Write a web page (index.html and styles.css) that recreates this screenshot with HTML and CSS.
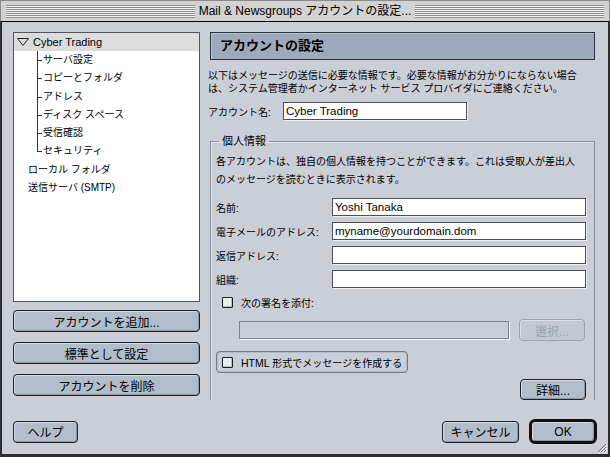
FILE: index.html
```html
<!DOCTYPE html>
<html>
<head>
<meta charset="UTF-8">
<title>Mail &amp; Newsgroups アカウントの設定</title>
<link rel="stylesheet" href="styles.css">
</head>
<body>
<div class="window">
    <div class="titlebar">
        <span class="stripes"></span>
        <span class="title">Mail &amp; Newsgroups アカウントの設定...</span>
        <span class="stripes"></span>
    </div>
    <div class="frame">
        <div class="columns">
            <div class="side">
                <ul class="tree">
                    <li class="row top selected">
                        <svg class="twisty" width="12" height="8" viewBox="0 0 12 8"><polygon points="0.5,0.5 11.5,0.5 6,7.5" fill="none" stroke="#222" stroke-width="1"/></svg>
                        <span class="en">Cyber Trading</span>
                    </li>
                    <li class="row child">サーバ設定</li>
                    <li class="row child">コピーとフォルダ</li>
                    <li class="row child">アドレス</li>
                    <li class="row child">ディスク スペース</li>
                    <li class="row child">受信確認</li>
                    <li class="row child last">セキュリティ</li>
                    <li class="row plain">ローカル フォルダ</li>
                    <li class="row plain">送信サーバ (SMTP)</li>
                </ul>
                <button class="btn side-btn">アカウントを追加...</button>
                <button class="btn side-btn">標準として設定</button>
                <button class="btn side-btn">アカウントを削除</button>
            </div>
            <div class="pane">
                <h1 class="pane-head">アカウントの設定</h1>
                <p class="intro">以下はメッセージの送信に必要な情報です。必要な情報がお分かりにならない場合<br>は、システム管理者かインターネット サービス プロバイダにご連絡ください。</p>
                <div class="account-row">
                    <label class="account-label">アカウント名:</label>
                    <input class="text account-input" type="text" value="Cyber Trading">
                </div>
                <fieldset class="group">
                    <legend>個人情報</legend>
                    <p class="group-intro">各アカウントは、独自の個人情報を持つことができます。これは受取人が差出人<br>のメッセージを読むときに表示されます。</p>
                    <div class="form-grid">
                        <label>名前:</label>
                        <input class="text" type="text" value="Yoshi Tanaka">
                        <label>電子メールのアドレス:</label>
                        <input class="text" type="text" value="myname@yourdomain.dom">
                        <label>返信アドレス:</label>
                        <input class="text" type="text" value="">
                        <label>組織:</label>
                        <input class="text" type="text" value="">
                    </div>
                    <label class="check sig-check"><span class="box"></span><span>次の署名を添付:</span></label>
                    <div class="sig-row">
                        <input class="text sig-input" type="text" disabled>
                        <button class="btn small-btn" disabled>選択...</button>
                    </div>
                    <label class="check framed"><span class="box"></span><span><span class="en-s">HTML</span> 形式でメッセージを作成する</span></label>
                    <div class="detail-row">
                        <button class="btn small-btn">詳細...</button>
                    </div>
                </fieldset>
            </div>
        </div>
        <div class="footer">
            <button class="btn help-btn">ヘルプ</button>
            <span class="spacer"></span>
            <button class="btn cancel-btn">キャンセル</button>
            <button class="btn ok-btn">OK</button>
        </div>
        <svg class="grip" width="11" height="11" viewBox="0 0 11 11">
            <path d="M10 2 L2 10 M10 5 L5 10 M10 8 L8 10" stroke="#6b7079" stroke-width="1"/>
            <path d="M11 3 L3 11 M11 6 L6 11 M11 9 L9 11" stroke="#f2f4f7" stroke-width="1"/>
        </svg>
    </div>
</div>
</body>
</html>
```

FILE: styles.css
```css
* { box-sizing: border-box; }
html, body {
    margin: 0;
    padding: 0;
    width: 610px;
    height: 457px;
    overflow: hidden;
    background: #c9ced7;
}
body {
    font-family: "Liberation Sans", "Noto Sans CJK JP", sans-serif;
    font-size: 10px;
    color: #000;
}
.window {
    width: 610px;
    height: 457px;
    display: flex;
    flex-direction: column;
}

/* title bar */
.titlebar {
    height: 22px;
    display: flex;
    align-items: center;
    padding: 0 5px;
    background: #d2d2d2;
    border: 1px solid #8a8a8a;
    border-bottom: 1px solid #000;
}
.stripes {
    flex: 1;
    height: 13px;
    background: repeating-linear-gradient(to bottom, #8e8e8e 0, #8e8e8e 1px, #f4f4f4 1px, #f4f4f4 2px);
}
.title {
    padding: 0 4px;
    font-size: 12px;
    line-height: 14px;
    white-space: nowrap;
}

/* window body */
.frame {
    position: relative;
    flex: 1;
    padding: 10px 13px 0 11px;
    background: #c9ced7;
    border-left: 2px solid #2b2e33;
    border-right: 2px solid #2b2e33;
    border-bottom: 3px solid #2b2e33;
}
.columns {
    display: flex;
    gap: 10px;
    height: 369px;
}
.side {
    width: 187px;
    display: flex;
    flex-direction: column;
}
.pane {
    flex: 1;
}

/* tree */
.tree {
    list-style: none;
    margin: 0;
    padding: 0;
    height: 270px;
    background: #fff;
    border: 1px solid #50555e;
}
.row {
    position: relative;
    height: 18.25px;
    line-height: 18px;
    white-space: nowrap;
}
.row.top {
    display: flex;
    align-items: center;
    height: 18px;
    padding-left: 3px;
}
.row.selected {
    background: #dcdcdc;
}
.twisty {
    margin-right: 4px;
}
.en {
    font-size: 11px;
}
.row.child {
    padding-left: 29px;
}
.row.child::before {
    content: "";
    position: absolute;
    left: 23px;
    top: 0;
    bottom: 0;
    width: 1px;
    background: #333;
}
.row.child.last::before {
    bottom: 50%;
}
.row.child::after {
    content: "";
    position: absolute;
    left: 23px;
    top: 50%;
    width: 5px;
    height: 1px;
    background: #333;
}
.row.plain {
    padding-left: 14px;
}

/* buttons */
.btn {
    font-family: "Liberation Sans", "Noto Sans CJK JP", sans-serif;
    font-size: 12px;
    color: #000;
    height: 22px;
    padding: 0;
    background: #b3bcc9;
    border: 1px solid #1d2026;
    border-radius: 4px;
    box-shadow: inset 1px 1px 0 #d6dce4, inset -1px -1px 0 #8d96a3;
}
.side-btn {
    width: 187px;
    margin-top: 10px;
}
.side-btn:first-of-type {
    margin-top: 8px;
}
.small-btn {
    width: 66px;
}
.btn:disabled {
    color: #9aa1ab;
    background: #c3c9d2;
    border-color: #9da4ae;
    box-shadow: inset 1px 1px 0 #dde1e7;
}

/* right pane */
.pane-head {
    margin: 0;
    height: 28px;
    padding-left: 9px;
    font-size: 13px;
    font-weight: bold;
    line-height: 26px;
    background: #9eaabb;
    border: 1px solid #2d3440;
    box-shadow: inset 1px 1px 0 #b9c3d0;
}
.intro {
    margin: 9px 0 0 -2px;
    line-height: 13px;
    white-space: nowrap;
}
.account-row {
    display: flex;
    align-items: center;
    margin: 7px 0 0 -2px;
}
.account-label {
    width: 75px;
}
.text {
    height: 18px;
    margin: 0;
    padding: 0 2px;
    font-family: "Liberation Sans", "Noto Sans CJK JP", sans-serif;
    font-size: 11.5px;
    color: #000;
    background: #fff;
    border: 1px solid #4a4f58;
    box-shadow: 1px 1px 0 #eef0f4;
    border-radius: 0;
    outline: none;
}
.account-input {
    width: 184px;
}

/* group box */
.group {
    margin: 14px 0 0;
    padding: 0 8px 0 5px;
    border: 1px solid #8c939e;
    border-bottom: none;
    box-shadow: inset 1px 1px 0 #e3e7ec;
}
.group legend {
    margin-left: 3px;
    padding: 0 3px;
    font-size: 11px;
    line-height: 14px;
}
.group-intro {
    margin: 5px 0 0;
    line-height: 18px;
    white-space: nowrap;
}
.form-grid {
    display: grid;
    grid-template-columns: 116px 1fr;
    row-gap: 6px;
    align-items: center;
    margin-top: 9px;
}
.form-grid .text {
    width: 100%;
}
.check {
    display: flex;
    align-items: center;
    gap: 8px;
    height: 14px;
    white-space: nowrap;
}
.box {
    flex: none;
    width: 11px;
    height: 11px;
    background: #e6eef0;
    border: 1px solid #1d2026;
    border-radius: 1px;
    box-shadow: inset -1px -1px 0 #b7c0c8;
}
.sig-check {
    margin: 7px 0 0 6px;
}
.sig-row {
    display: flex;
    align-items: center;
    gap: 10px;
    margin: 10px 0 0 23px;
}
.sig-input {
    width: 270px;
    background: #c9ced7;
    border-color: #7d848f;
    box-shadow: 1px 1px 0 #f0f2f5;
}
.framed {
    width: 192px;
    height: 22px;
    margin-top: 10px;
    padding-left: 5px;
    border: 1px solid #737b87;
    border-radius: 4px;
    box-shadow: inset 0 0 0 1px #b4bcc7;
}
.en-s {
    font-size: 10.5px;
}
.detail-row {
    display: flex;
    justify-content: flex-end;
    margin-top: 6px;
}
.detail-row .btn {
    height: 21px;
}

/* footer */
.footer {
    display: flex;
    align-items: center;
    height: 25px;
    margin-top: 18px;
}
.spacer {
    flex: 1;
}
.help-btn {
    width: 65px;
}
.cancel-btn {
    width: 77px;
}
.ok-btn {
    width: 68px;
    height: 25px;
    margin: 0 -2px 0 10px;
    border: 3px solid #111;
    border-radius: 6px;
}
.grip {
    position: absolute;
    right: 1px;
    bottom: 1px;
}
```
